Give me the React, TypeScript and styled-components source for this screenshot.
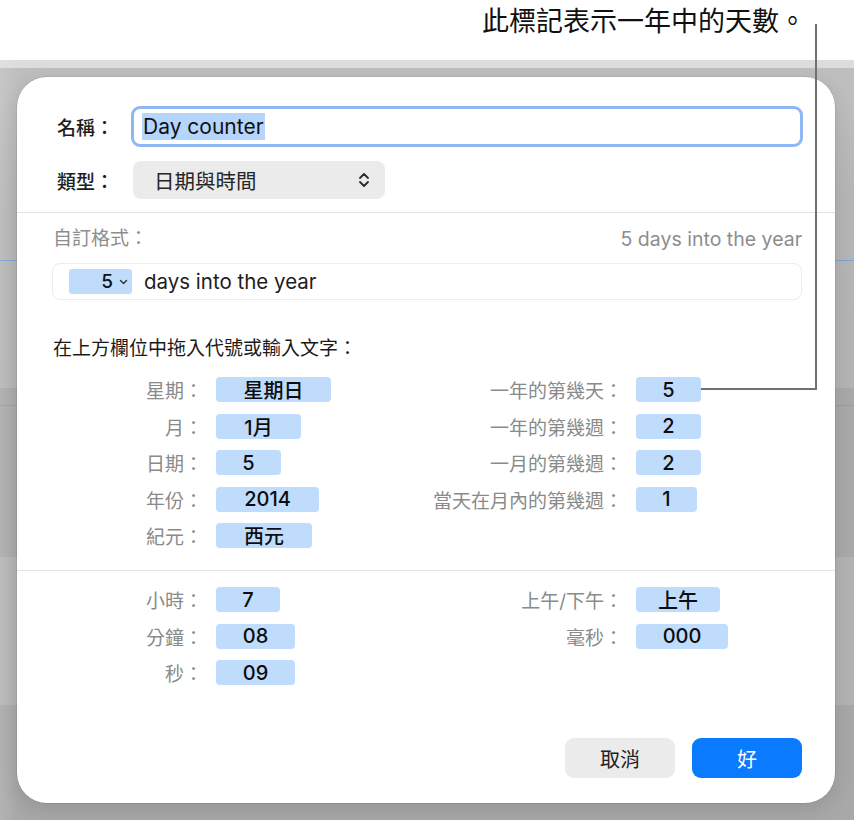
import styled, { createGlobalStyle } from "styled-components";

const GlobalStyle = createGlobalStyle`
  html, body {
    margin: 0;
    padding: 0;
    background: #ffffff;
  }
  body {
    font-family: "Inter", "Noto Sans CJK TC", "Noto Sans", sans-serif;
    -webkit-font-smoothing: antialiased;
  }
`;

type Field = { label: string; value: string; width: number };

const dateLeft: Field[] = [
  { label: "星期：", value: "星期日", width: 115 },
  { label: "月：", value: "1月", width: 85 },
  { label: "日期：", value: "5", width: 65 },
  { label: "年份：", value: "2014", width: 103 },
  { label: "紀元：", value: "西元", width: 96 },
];

const dateRight: Field[] = [
  { label: "一年的第幾天：", value: "5", width: 65 },
  { label: "一年的第幾週：", value: "2", width: 65 },
  { label: "一月的第幾週：", value: "2", width: 65 },
  { label: "當天在月內的第幾週：", value: "1", width: 61 },
];

const timeLeft: Field[] = [
  { label: "小時：", value: "7", width: 64 },
  { label: "分鐘：", value: "08", width: 79 },
  { label: "秒：", value: "09", width: 79 },
];

const timeRight: Field[] = [
  { label: "上午/下午：", value: "上午", width: 84 },
  { label: "毫秒：", value: "000", width: 92 },
];

const App = () => {
  const rows = (left: Field[], right: Field[]) =>
    left.map((l, i) => {
      const r = right[i];
      return (
        <Row key={l.label}>
          <FieldLabel>{l.label}</FieldLabel>
          <Cell>
            <Token $w={l.width}>{l.value}</Token>
          </Cell>
          <FieldLabel>{r ? r.label : ""}</FieldLabel>
          <Cell>{r && <Token $w={r.width}>{r.value}</Token>}</Cell>
        </Row>
      );
    });

  return (
    <Page>
      <GlobalStyle />
      <Callout>
        <span>此標記表示一年中的天數。</span>
      </Callout>
      <Backdrop>
        <Dialog>
          <TopSection>
            <FormRow>
              <FormLabel>名稱：</FormLabel>
              <NameInput>
                <Selected>Day counter</Selected>
              </NameInput>
            </FormRow>
            <FormRow>
              <FormLabel>類型：</FormLabel>
              <PopupButton>
                <span>日期與時間</span>
                <svg width="12" height="18" viewBox="0 0 12 18">
                  <path
                    d="M2 7 L6 3 L10 7 M2 11 L6 15 L10 11"
                    fill="none"
                    stroke="#2a2a2a"
                    strokeWidth="1.8"
                    strokeLinecap="round"
                    strokeLinejoin="round"
                  />
                </svg>
              </PopupButton>
            </FormRow>
          </TopSection>

          <FormatSection>
            <FormatHeader>
              <span>自訂格式：</span>
              <Preview>5 days into the year</Preview>
            </FormatHeader>
            <TokenField>
              <InlineToken>
                5
                <svg width="9" height="6" viewBox="0 0 9 6">
                  <path
                    d="M1.5 1.5 L4.5 4.5 L7.5 1.5"
                    fill="none"
                    stroke="#333"
                    strokeWidth="1.4"
                    strokeLinecap="round"
                    strokeLinejoin="round"
                  />
                </svg>
              </InlineToken>
              <span>days into the year</span>
            </TokenField>
            <Hint>在上方欄位中拖入代號或輸入文字：</Hint>
            <Grid>{rows(dateLeft, dateRight)}</Grid>
          </FormatSection>

          <TimeSection>
            <Grid>{rows(timeLeft, timeRight)}</Grid>
          </TimeSection>

          <Buttons>
            <Button>取消</Button>
            <Button $primary>好</Button>
          </Buttons>
        </Dialog>
      </Backdrop>
      <Leader width="854" height="400" viewBox="0 0 854 400">
        <path d="M816 24 L816 389 L701 389" fill="none" stroke="#707070" strokeWidth="2" />
      </Leader>
    </Page>
  );
};

const Page = styled.div`
  position: relative;
  width: 854px;
  height: 822px;
  overflow: hidden;
  background: #ffffff;
`;

const Callout = styled.div`
  height: 60px;
  display: flex;
  align-items: flex-start;
  justify-content: flex-end;
  padding-right: 48px;
  box-sizing: border-box;
  span {
    font-family: "Noto Sans CJK TC", sans-serif;
    font-size: 27px;
    line-height: 39px;
    color: #111;
  }
`;

const Backdrop = styled.div`
  height: 760px;
  box-sizing: border-box;
  padding: 17px 19px 0 17px;
  background:
    linear-gradient(to right, rgba(255, 255, 255, 0.12), rgba(255, 255, 255, 0) 20px),
    linear-gradient(to bottom, transparent 200px, #7ba2d6 200px 201px, transparent 201px 345px, #7ba2d6 345px 346px, transparent 346px),
    linear-gradient(to bottom, #dcdcdc 0 8px, #bebebe 8px 40px, #b6b6b6 140px, #b4b4b4 328px, #a9a9a9 328px 497px, #b3b3b3 497px 645px, #a8a8a8 645px);
`;

const Dialog = styled.div`
  height: 726px;
  background: #ffffff;
  border-radius: 30px;
  box-shadow: 0 0 0 0.5px rgba(0, 0, 0, 0.12), 0 6px 20px rgba(0, 0, 0, 0.12);
  display: flex;
  flex-direction: column;
`;

const TopSection = styled.div`
  display: flex;
  flex-direction: column;
  gap: 14px;
  padding: 29px 32px 13px 40px;
  border-bottom: 1px solid #e3e3e3;
`;

const FormRow = styled.div`
  display: flex;
  align-items: center;
`;

const FormLabel = styled.div`
  width: 74px;
  flex: none;
  font-size: 19px;
  font-weight: 500;
  color: #1d1d1d;
`;

const NameInput = styled.div`
  flex: 1;
  height: 41px;
  box-sizing: border-box;
  border: 3.5px solid #8fb7f6;
  border-radius: 9px;
  display: flex;
  align-items: center;
  padding-left: 8px;
`;

const Selected = styled.span`
  background: #b5d5fd;
  font-size: 21px;
  line-height: 27px;
  padding: 0 1px;
  color: #111;
`;

const PopupButton = styled.div`
  margin-left: 2px;
  width: 252px;
  height: 38px;
  box-sizing: border-box;
  border-radius: 8px;
  background: #ebebeb;
  display: flex;
  align-items: center;
  justify-content: space-between;
  padding: 0 15px 0 21px;
  span {
    font-size: 20.5px;
    color: #262626;
  }
`;

const FormatSection = styled.div`
  padding: 14px 33px 23px 35px;
  border-bottom: 1px solid #e3e3e3;
  display: flex;
  flex-direction: column;
`;

const FormatHeader = styled.div`
  display: flex;
  justify-content: space-between;
  align-items: center;
  padding-left: 1px;
  font-size: 19px;
  line-height: 24px;
  color: #8d8d8d;
`;

const Preview = styled.span`
  font-size: 19.5px;
`;

const TokenField = styled.div`
  margin-top: 12px;
  height: 37px;
  box-sizing: border-box;
  border: 1px solid #ececec;
  border-radius: 8px;
  display: flex;
  align-items: center;
  gap: 12px;
  padding-left: 16px;
  font-size: 20.5px;
  color: #1d1d1d;
`;

const InlineToken = styled.div`
  width: 63px;
  height: 25px;
  box-sizing: border-box;
  border-radius: 3px;
  background: #c0dcfc;
  display: flex;
  align-items: center;
  justify-content: flex-end;
  gap: 6px;
  padding-right: 4px;
  font-size: 19px;
  font-weight: 500;
  color: #111;
`;

const Hint = styled.div`
  margin-top: 37px;
  padding-left: 1px;
  font-size: 19px;
  line-height: 24px;
  color: #1a1a1a;
`;

const Grid = styled.div`
  margin-top: 15px;
  display: flex;
  flex-direction: column;
  gap: 11.5px;
`;

const Row = styled.div`
  display: grid;
  grid-template-columns: 151px 174px 220px auto;
  column-gap: 13px;
  align-items: center;
  height: 25px;
`;

const FieldLabel = styled.div`
  text-align: right;
  font-size: 19px;
  color: #8a8a8a;
  white-space: nowrap;
`;

const Cell = styled.div`
  display: flex;
`;

const Token = styled.div<{ $w: number }>`
  width: ${(p) => p.$w}px;
  height: 25px;
  border-radius: 4px;
  background: #c0dcfc;
  display: flex;
  align-items: center;
  justify-content: center;
  font-size: 20px;
  font-weight: 500;
  color: #0d0d0d;
`;

const TimeSection = styled.div`
  padding: 0 33px 0 35px;
`;

const Buttons = styled.div`
  margin-top: auto;
  display: flex;
  justify-content: flex-end;
  gap: 17px;
  padding: 0 33px 25px 0;
`;

const Button = styled.div<{ $primary?: boolean }>`
  width: 110px;
  height: 40px;
  border-radius: 9px;
  display: flex;
  align-items: center;
  justify-content: center;
  font-size: 20px;
  background: ${(p) => (p.$primary ? "#0a7aff" : "#ebebeb")};
  color: ${(p) => (p.$primary ? "#ffffff" : "#222")};
`;

const Leader = styled.svg`
  position: absolute;
  left: 0;
  top: 0;
  pointer-events: none;
`;

export default App;
